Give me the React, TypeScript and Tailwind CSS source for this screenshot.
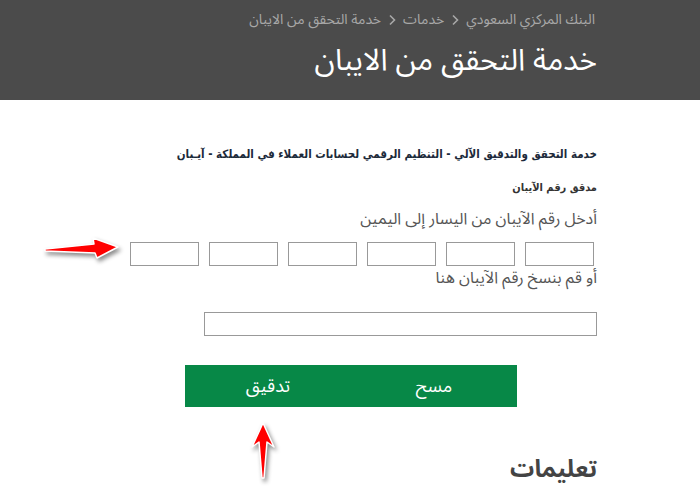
import React from 'react';

const arabic = { fontFamily: '"Noto Sans Arabic", "DejaVu Sans", "Noto Sans", sans-serif' };
const arabicBold = { fontFamily: '"DejaVu Sans Condensed", "DejaVu Sans", sans-serif' };

const Chevron: React.FC = () => (
    <svg width="8" height="12" viewBox="0 0 8 12" className="mx-[7px] inline-block">
        <path d="M2 1.5 L6.5 6 L2 10.5" fill="none" stroke="#a8a8a8" strokeWidth="1.6" />
    </svg>
);

const ArrowRight: React.FC = () => (
    <svg width="84" height="32" viewBox="0 0 84 32" className="absolute left-[40px] top-[232px] drop-shadow-[2px_3px_2px_rgba(0,0,0,0.45)]">
        <polygon points="5,17 54,12 53,6 78,15 57,26 55,21 5,19" fill="#ff0000" stroke="#ffffff" strokeWidth="1.5" strokeLinejoin="round" />
    </svg>
);

const ArrowUp: React.FC = () => (
    <svg width="34" height="66" viewBox="0 0 34 66" className="absolute left-[246px] top-[418px] drop-shadow-[2px_3px_2px_rgba(0,0,0,0.45)]">
        <polygon points="17,5 28,29 21,24 18,60 16,60 13,24 6,29" fill="#ff0000" stroke="#ffffff" strokeWidth="1.5" strokeLinejoin="round" />
    </svg>
);

export default function App() {
    return (
        <div dir="rtl" className="relative w-[700px] h-[498px] overflow-hidden bg-white" style={arabic}>
            <header className="h-[100px] bg-[#4b4b4b] pr-[105px] pt-[9px]">
                <nav className="flex items-center h-[22px] text-[14px] leading-[20px] text-[#a8a8a8]">
                    <span>البنك المركزي السعودي</span>
                    <Chevron />
                    <span>خدمات</span>
                    <Chevron />
                    <span>خدمة التحقق من الايبان</span>
                </nav>
                <h1 className="mt-[12px] mr-[-2px] text-[30px] leading-[36px] text-white">خدمة التحقق من الايبان</h1>
            </header>

            <main className="pr-[103px] pt-[45px] flex flex-col items-start">
                <h2 className="text-[11.5px] leading-[18px] font-bold text-[#1c2a3a]" style={arabicBold}>
                    خدمة التحقق والتدقيق الآلي - التنظيم الرقمي لحسابات العملاء في المملكة - آيـبان
                </h2>
                <p className="mt-[17px] text-[11px] leading-[16px] font-bold text-[#333]" style={arabicBold}>مدقق رقم الآيبان</p>
                <p className="mt-[12px] text-[16px] leading-[22px] text-[#555]">أدخل رقم الآيبان من اليسار إلى اليمين</p>

                <div className="mt-[12px] mr-[3px] flex gap-[10px]">
                    {[0, 1, 2, 3, 4, 5].map((i) => (
                        <input key={i} className="w-[69px] h-[24px] border border-[#999] bg-white outline-none" />
                    ))}
                </div>
                <p className="mt-[1px] text-[16px] leading-[22px] text-[#555]">أو قم بنسخ رقم الآيبان هنا</p>

                <input className="mt-[23px] w-[393px] h-[24px] border border-[#999] bg-white outline-none" />

                <div className="mt-[29px] mr-[80px] flex w-[332px] h-[42px] bg-[#078847]">
                    <button className="flex-1 text-white text-[18px]">مسح</button>
                    <button className="flex-1 text-white text-[18px]">تدقيق</button>
                </div>

                <h3 className="mt-[47px] text-[24px] leading-[32px] font-bold text-[#444]">تعليمات</h3>
            </main>

            <ArrowRight />
            <ArrowUp />
        </div>
    );
}
